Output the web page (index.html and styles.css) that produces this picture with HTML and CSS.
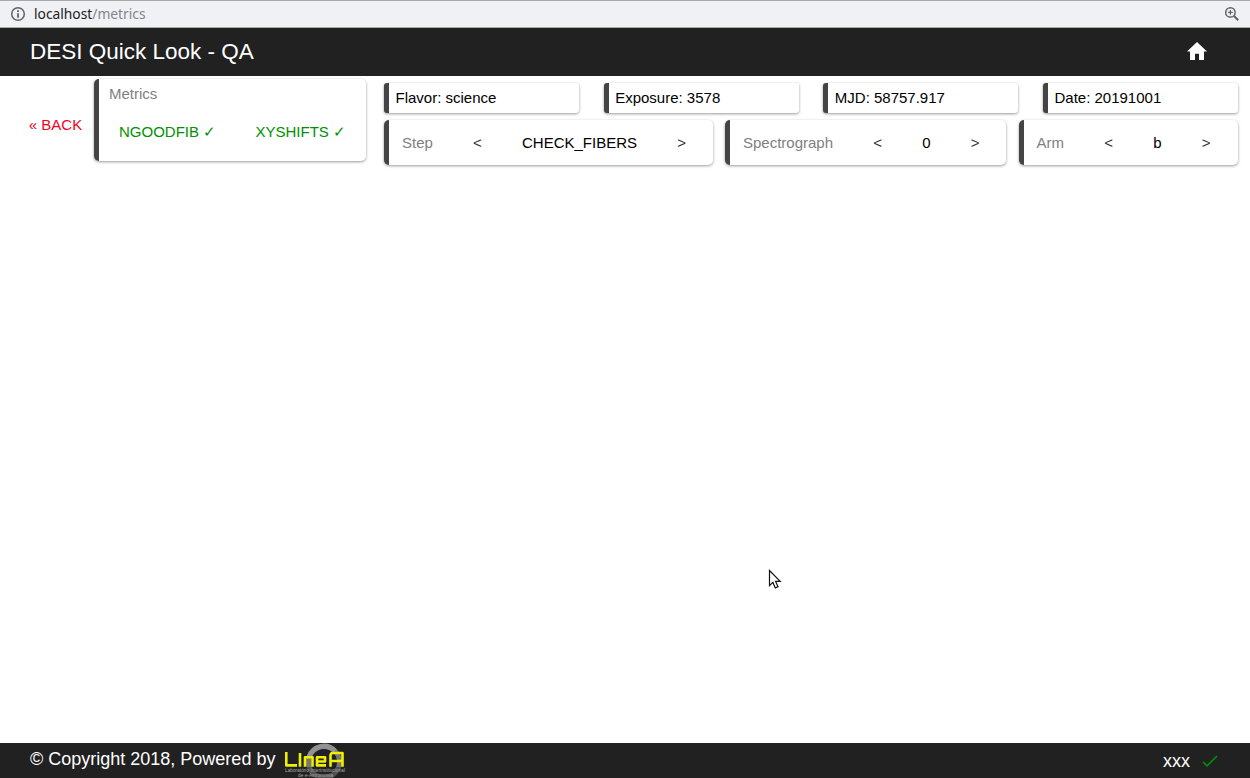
FILE: index.html
```html
<!DOCTYPE html>
<html lang="en">
<head>
<meta charset="utf-8">
<title>DESI Quick Look - QA</title>
<link rel="stylesheet" href="styles.css">
</head>
<body>
<div class="urlbar">
  <svg class="info-icon" viewBox="0 0 16 16" width="16" height="16"><circle cx="8" cy="8" r="6.3" fill="none" stroke="#5f6368" stroke-width="1.5"/><path d="M7.1 4.3h1.8V6H7.1zM7.1 7.2h1.8v4.5H7.1z" fill="#5f6368"/></svg>
  <span class="url"><span class="host">localhost</span>/metrics</span>
  <svg class="zoom-icon" viewBox="0 0 16 16" width="16" height="16" fill="none" stroke="#5f6368"><circle cx="6.4" cy="6.4" r="4.7" stroke-width="1.5"/><path d="M9.8 9.8l4.4 4.4" stroke-width="2"/><path d="M4 6.4h4.8M6.4 4v4.8" stroke-width="1.2"/></svg>
</div>
<header class="header">
  <span class="title">DESI Quick Look - QA</span>
  <svg class="home" viewBox="2 3 20 17" width="20" height="18" preserveAspectRatio="none"><path d="M10 20v-6h4v6h5v-8h3L12 3 2 12h3v8z" fill="#fff"/></svg>
</header>
<main class="main">
  <a class="back">« BACK</a>
  <section class="card metrics">
    <div class="label">Metrics</div>
    <div class="tests"><span>NGOODFIB ✓</span><span>XYSHIFTS ✓</span></div>
  </section>
  <div class="panel">
    <div class="row">
      <div class="card info">Flavor: science</div>
      <div class="card info">Exposure: 3578</div>
      <div class="card info">MJD: 58757.917</div>
      <div class="card info">Date: 20191001</div>
    </div>
    <div class="row">
      <div class="card control step"><span class="label">Step</span><span class="arrow">&lt;</span><span>CHECK_FIBERS</span><span class="arrow">&gt;</span></div>
      <div class="card control spectrograph"><span class="label">Spectrograph</span><span class="arrow">&lt;</span><span>0</span><span class="arrow">&gt;</span></div>
      <div class="card control arm"><span class="label">Arm</span><span class="arrow">&lt;</span><span>b</span><span class="arrow">&gt;</span></div>
    </div>
  </div>
</main>
<footer class="footer">
  <span class="copyright">© Copyright 2018, Powered by</span>
  <svg class="logo" viewBox="0 0 64 35" width="64" height="35">
    <circle cx="41" cy="19" r="15.5" fill="none" stroke="#77777a" stroke-width="5"/>
    <path d="M26 14A15.5 15.5 0 0 1 52 8" fill="none" stroke="#929295" stroke-width="5"/>
    <rect x="0" y="24" width="64" height="11" fill="#222" opacity=".45"/>
    <g fill="none" stroke="#eef000" stroke-width="2.6" stroke-linejoin="round">
      <path d="M3.3 9v13.4H14M17 10v13.7M22 23.7v-9.4h7.5v9.4M43 22.4h-9v-8.1h8v4.2h-8M47.5 23.7V12.5q0-2.5 2.5-2.5h9.5v13.7M47.5 18H60"/>
    </g>
    <text x="2" y="29.4" class="logo-caption" textLength="60">Laboratório Interinstitucional</text>
    <text x="15" y="34.4" class="logo-caption" textLength="35">de e-Astronomia</text>
  </svg>
  <span class="user">xxx</span>
  <svg class="check" viewBox="0 0 16 12" width="16" height="12"><path d="M1 6.8l4 4L15 1" fill="none" stroke="#009000" stroke-width="1.6"/></svg>
</footer>
<svg class="cursor" viewBox="0 0 14 21" width="14" height="21"><path d="M1.5 1.5v15.2l3.4-3.3 2.4 5.5 2.7-1.2-2.4-5.3h4.6z" fill="#fff" stroke="#111" stroke-width="1.2"/></svg>
</body>
</html>
```
FILE: styles.css
```css
* { box-sizing: border-box; }
body {
  margin: 0;
  height: 778px;
  display: flex;
  flex-direction: column;
  overflow: hidden;
  background: #fff;
  color: #000;
  font: 15px/17px "Liberation Sans", Arial, sans-serif;
}
svg { display: block; flex: none; }
span, a { white-space: nowrap; }
.urlbar {
  height: 28px;
  flex: none;
  display: flex;
  align-items: center;
  padding: 0 10px;
  background: #f0f1f4;
  border-top: 1px solid #a9a9ab;
  border-bottom: 1px solid #a9a9ab;
}
.url {
  margin-left: 8px;
  font: 13.8px/20px "Noto Sans", sans-serif;
  color: #80868b;
}
.host { color: #202124; }
.zoom-icon { margin-left: auto; }
.header {
  height: 48px;
  flex: none;
  display: flex;
  align-items: center;
  justify-content: space-between;
  padding: 0 43px 0 30px;
  background: #212121;
  color: #fff;
}
.title { font-size: 22.5px; line-height: 26px; }
.home { margin-bottom: 2px; }
.main {
  flex: 1;
  display: flex;
  align-items: flex-start;
  padding: 3px 12px 0 0;
}
.back { width: 94px; padding: 37px 0 0 28.8px; color: #f5001d; }
.card {
  background: #fff;
  border-left: 5px solid #444;
  border-radius: 5px;
  box-shadow: 0 1px 3px rgba(0, 0, 0, .4);
}
.label { color: #808080; }
.metrics { width: 272px; height: 82px; padding: 6px 20px 0 10px; }
.tests {
  display: flex;
  justify-content: space-between;
  padding: 21px 0 0 10px;
  color: #009000;
}
.panel {
  flex: 1;
  display: flex;
  flex-direction: column;
  gap: 7px;
  margin: 4px 0 0 18px;
}
.row { display: flex; justify-content: space-between; }
.info { width: 195px; height: 30px; padding: 6px 0 0 6.5px; border-radius: 3px; }
.control {
  height: 45px;
  display: flex;
  align-items: center;
  gap: 40.2px;
  padding: 0 0 1px 13px;
}
.step { width: 329px; }
.spectrograph { width: 281px; margin-right: .5px; }
.arm { width: 219.5px; }
.arrow { color: #333; }
.footer {
  height: 35px;
  flex: none;
  display: flex;
  align-items: center;
  padding: 0 32px 0 30px;
  background: #212121;
  color: #fff;
  font-size: 18px;
  line-height: 20px;
}
.copyright { margin-top: -3px; }
.logo { margin-left: 8px; }
.logo-caption { font-size: 4.6px; fill: #aaa; }
.user { margin-left: auto; }
.check { margin-left: 12px; }
.cursor { position: absolute; left: 768px; top: 569px; }
```
